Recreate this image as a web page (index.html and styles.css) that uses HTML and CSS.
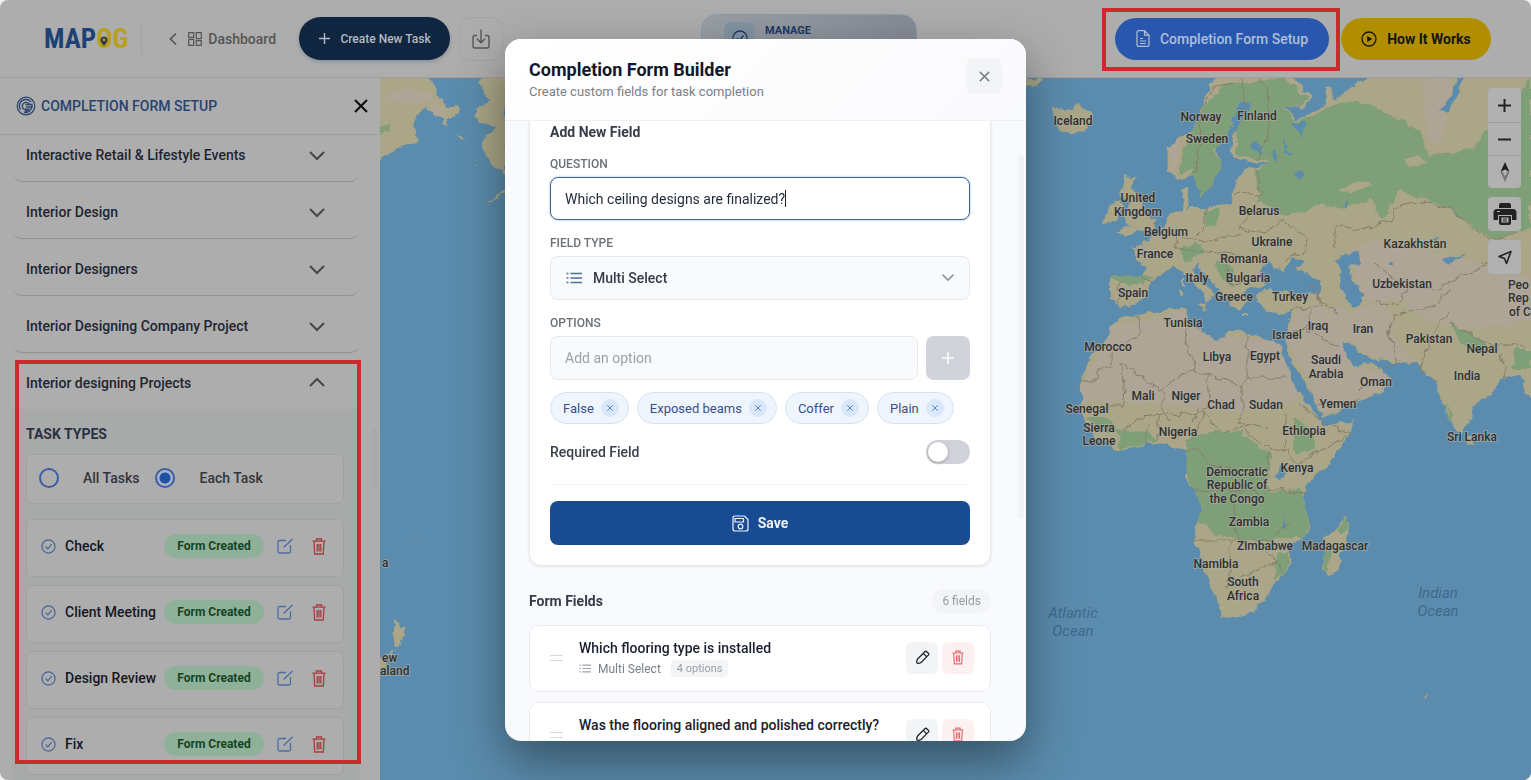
FILE: index.html
```html
<!DOCTYPE html>
<html lang="en">
<head>
<meta charset="utf-8">
<meta name="viewport" content="width=device-width, initial-scale=1">
<title>MAPOG – Completion Form Builder</title>
<link rel="stylesheet" href="styles.css">
</head>
<body>
<svg class="defs" width="0" height="0" aria-hidden="true">
  <symbol id="i-chev" viewBox="0 0 18 18"><path d="M2 6l7 7 7-7" fill="none" stroke="currentColor" stroke-width="2"/></symbol>
  <symbol id="i-x" viewBox="0 0 14 14"><path d="M1 1l12 12M13 1L1 13" fill="none" stroke="currentColor" stroke-width="2"/></symbol>
  <symbol id="i-xs" viewBox="0 0 14 14"><path d="M2 2l10 10M12 2L2 12" fill="none" stroke="currentColor" stroke-width="1.6"/></symbol>
  <symbol id="i-plus" viewBox="0 0 14 14"><path d="M7 1v12M1 7h12" fill="none" stroke="currentColor" stroke-width="1.5"/></symbol>
  <symbol id="i-check" viewBox="0 0 16 16"><circle cx="8" cy="8" r="7" fill="none" stroke="currentColor" stroke-width="1.3"/><path d="M5 8l2.300 2.500 4.200-5" fill="none" stroke="currentColor" stroke-width="1.3"/></symbol>
  <symbol id="i-edit" viewBox="0 0 16 16"><path d="M9 2.500H2.500q-1.500 0-1.500 1.500v9.500q0 1.500 1.500 1.500H12q1.500 0 1.500-1.500V7M6.500 9.500L15.500 1" fill="none" stroke="currentColor" stroke-width="1.3"/></symbol>
  <symbol id="i-trash" viewBox="0 0 14 17"><path d="M.5 3.200h13M4.500 3V1h5v2M2 3.500L2.700 16h8.600L12 3.500M5.200 6v7.500M7 6v7.500M8.800 6v7.500" fill="none" stroke="currentColor" stroke-width="1.3"/></symbol>
  <symbol id="i-list" viewBox="0 0 16 12"><path d="M4.500 1.500H16M4.500 6H16M4.500 10.500H16M.5 1.500h2M.5 6h2M.5 10.500h2" fill="none" stroke="currentColor" stroke-width="1.5"/></symbol>
  <symbol id="i-pen" viewBox="0 0 16 16"><path d="M10.500 1.800q1-1 2 0l1.700 1.700q1 1 0 2L6.800 13q-2 1.400-3.800 1.200-1.200-.1-1.200-1.200Q1.800 11 3 9.300zM8.800 3.600l3.600 3.600" fill="none" stroke="currentColor" stroke-width="1.4"/></symbol>
</svg>

<div class="app">
  <header class="topbar">
    <div class="topbar-left">
      <div class="logo"><span>MAP</span><span class="logo-y">O<svg viewBox="0 0 8 10" width="8" height="10" aria-hidden="true"><path d="M4 10C1 6.500.5 5.500.5 4a3.500 3.500 0 017 0c0 1.500-.5 2.500-3.500 6z" fill="#333c44"/><circle cx="4" cy="3.800" r="1.400" fill="#b8a22c"/></svg></span><span class="logo-y">G</span></div>
      <a class="dash" href="#">
        <svg width="8" height="14" viewBox="0 0 8 14" aria-hidden="true"><path d="M7 1.500L1.500 7 7 12.500" fill="none" stroke="currentColor" stroke-width="1.700"/></svg>
        <svg width="14" height="14" viewBox="0 0 14 14" aria-hidden="true"><path d="M.7.700h5v4.600h-5zM8.300.700h5v6h-5zM.7 7.300h5v6h-5zM8.300 8.700h5v4.600h-5z" fill="none" stroke="currentColor" stroke-width="1.200"/></svg>
        <span>Dashboard</span>
      </a>
      <button class="create" type="button"><svg width="13" height="13"><use href="#i-plus"/></svg>Create New Task</button>
      <button class="download" type="button" aria-label="Download"><svg width="18" height="20" viewBox="0 0 18 20"><path d="M5 6.500H3q-2 0-2 2V17q0 2 2 2h12q2 0 2-2V8.500q0-2-2-2h-2M9 .5v13M5 9.800l4 4 4-4" fill="none" stroke="currentColor" stroke-width="1.400"/></svg></button>
    </div>
    <div class="manage"><span class="manage-icon"><svg width="16" height="16"><use href="#i-check"/></svg></span><span>MANAGE</span></div>
    <div class="topbar-right">
      <div class="marked"><button class="pill pill-blue" type="button"><svg width="14" height="17" viewBox="0 0 14 17" aria-hidden="true"><path d="M1 2q0-1.300 1.300-1.300h6.200L13 5.200V15q0 1.300-1.300 1.300H2.300Q1 16.300 1 15zM8.500.700v4.500H13M4 8.500h3M4 11h6M4 13.500h6" fill="none" stroke="currentColor" stroke-width="1.200"/></svg>Completion Form Setup</button></div>
      <button class="pill pill-yellow" type="button"><svg width="16" height="16" viewBox="0 0 16 16" aria-hidden="true"><circle cx="8" cy="8" r="7" fill="none" stroke="currentColor" stroke-width="1.300"/><path d="M6.200 5l5 3-5 3z" fill="currentColor"/></svg>How It Works</button>
    </div>
  </header>

  <div class="main">
    <aside class="side">
      <div class="side-head">
        <svg width="20" height="20" viewBox="0 0 20 20" aria-hidden="true"><g fill="none" stroke="currentColor"><circle cx="10" cy="10" r="8.800" stroke-width="1.200"/><path d="M15 6.200A6.300 6.300 0 104.500 13.500M16 10.500A6.200 6.200 0 018 16" stroke-width="1.400"/><path d="M13 7.700A3.800 3.800 0 1013.500 12M9.500 8.500h6.500v2.300l-6 .2M10 17.500V13l3 2" stroke-width="1.300"/></g></svg>
        <h2>COMPLETION FORM SETUP</h2>
        <button type="button" aria-label="Close panel"><svg width="14" height="14"><use href="#i-x"/></svg></button>
      </div>
      <div class="side-body">
        <div class="acc">
          <button class="acc-row" type="button">Interactive Retail &amp; Lifestyle Events<svg width="18" height="18"><use href="#i-chev"/></svg></button>
          <button class="acc-row" type="button">Interior Design<svg width="18" height="18"><use href="#i-chev"/></svg></button>
          <button class="acc-row" type="button">Interior Designers<svg width="18" height="18"><use href="#i-chev"/></svg></button>
          <button class="acc-row" type="button">Interior Designing Company Project<svg width="18" height="18"><use href="#i-chev"/></svg></button>
          <section class="acc-open">
            <button class="acc-row open" type="button">Interior designing Projects<svg width="18" height="18"><use href="#i-chev"/></svg></button>
            <div class="acc-body">
              <h3>TASK TYPES</h3>
              <div class="radios">
                <label><input type="radio" name="scope">All Tasks</label>
                <label><input type="radio" name="scope" checked>Each Task</label>
              </div>
              <ul class="tasks">
                <li><svg width="15" height="15"><use href="#i-check"/></svg><span class="task-name">Check</span><span class="created">Form Created</span><button class="t-edit" type="button" aria-label="Edit"><svg width="16" height="16"><use href="#i-edit"/></svg></button><button class="t-del" type="button" aria-label="Delete"><svg width="14" height="17"><use href="#i-trash"/></svg></button></li>
                <li><svg width="15" height="15"><use href="#i-check"/></svg><span class="task-name">Client Meeting</span><span class="created">Form Created</span><button class="t-edit" type="button" aria-label="Edit"><svg width="16" height="16"><use href="#i-edit"/></svg></button><button class="t-del" type="button" aria-label="Delete"><svg width="14" height="17"><use href="#i-trash"/></svg></button></li>
                <li><svg width="15" height="15"><use href="#i-check"/></svg><span class="task-name">Design Review</span><span class="created">Form Created</span><button class="t-edit" type="button" aria-label="Edit"><svg width="16" height="16"><use href="#i-edit"/></svg></button><button class="t-del" type="button" aria-label="Delete"><svg width="14" height="17"><use href="#i-trash"/></svg></button></li>
                <li><svg width="15" height="15"><use href="#i-check"/></svg><span class="task-name">Fix</span><span class="created">Form Created</span><button class="t-edit" type="button" aria-label="Edit"><svg width="16" height="16"><use href="#i-edit"/></svg></button><button class="t-del" type="button" aria-label="Delete"><svg width="14" height="17"><use href="#i-trash"/></svg></button></li>
              </ul>
            </div>
          </section>
        </div>
        <div class="side-thumb"></div>
        <div class="side-mark"></div>
      </div>
    </aside>

    <div class="map">
      <svg class="map-svg" viewBox="380 78 1151 702" preserveAspectRatio="xMidYMid slice" role="img" aria-label="World map">
        <defs>
          <filter id="rough" x="-5%" y="-5%" width="110%" height="110%"><feTurbulence type="fractalNoise" baseFrequency=".09" numOctaves="3" seed="4"/><feDisplacementMap in="SourceGraphic" scale="9" xChannelSelector="R" yChannelSelector="G"/></filter>
          <clipPath id="land-clip"><use href="#eurasia"/><use href="#africa"/></clipPath>
        </defs>
        <g filter="url(#rough)">
          <path id="eurasia" class="land" d="M1110 276L1140 277 1145 267 1130 247 1147 242 1163 227 1173 213 1183 210 1180 190 1187 185 1189 197 1187 207 1207 207 1232 203 1233 190 1237 182 1243 170 1258 168 1268 162 1250 163 1233 157 1233 133 1240 122 1252 105 1240 100 1226 135 1217 150 1221 166 1212 184 1202 198 1193 175 1177 180 1168 170 1167 147 1193 130 1207 93 1220 70H1283L1312 97 1303 110 1285 104 1296 120 1309 116 1327 103 1325 87 1331 86 1333 100 1380 70H1540V400L1528 397 1520 373 1503 378 1497 390 1477 405 1468 423 1460 433 1450 423 1442 403 1438 380 1427 377 1417 363 1393 362 1373 358 1362 354 1350 344 1340 340 1353 367 1372 362 1390 378 1383 390 1360 401 1323 418 1318 407 1303 380 1287 353 1285 345 1288 330 1293 310 1280 313 1267 312 1257 303 1256 294 1265 288 1277 287 1300 291 1320 290 1320 281 1297 270 1303 262 1290 258 1284 272 1268 262 1262 272 1265 284 1253 288 1243 292 1248 302 1238 310 1223 295 1197 264 1190 268 1202 282 1215 293 1206 305 1203 294 1184 272 1173 267 1157 277 1149 292 1137 305 1120 308 1110 298z"/>
          <path id="africa" class="land" d="M1121 318L1137 315 1183 307 1188 310 1187 322 1202 333 1220 341 1228 330 1238 329 1247 333 1276 340 1283 357 1297 390 1303 398 1318 416 1322 423 1328 426 1352 421 1350 431 1333 460 1307 485 1303 497 1309 520 1308 533 1290 546 1289 568 1277 580 1270 593 1253 613 1227 618 1220 615 1220 605 1210 587 1195 540 1197 522 1202 513 1195 490 1185 477 1185 450 1177 448 1167 443 1147 445 1117 450 1097 437 1083 418 1078 408 1082 402 1080 380 1090 357 1107 340 1110 328z"/>
          <g class="land">
            <path d="M1345 517L1349 528 1345 545 1336 572 1327 575 1322 568 1326 550 1324 538 1336 530z"/>
            <path d="M1052 107L1060 112 1078 106 1091 112 1089 126 1071 135 1056 126z"/>
            <path d="M1124 177L1135 178 1131 188 1137 193 1146 215 1156 219 1153 229 1130 234 1118 233 1130 224 1124 214 1131 203 1121 195zM1108 203l12-4 2 10-8 13-10 1z"/>
            <path d="M1467 436q8 2 7 8l-6 1zM1181 289h3v9h-3zM1182 278h2v7h-2zM1198 304l9 1-2 5zM1241 315h9v2h-9zM1284 318l5-2v2z"/>
            <path d="M376 70H421L433 84 447 107 454 105 460 112 448 120 447 126 438 114 424 108 415 118 417 143 404 145 376 163zM478 78L490 100 472 114 480 123 496 126 480 146 492 165 506 175V70zM456 135l8 2-1 2zM473 163l5 1-2 2zM482 205l24-15v4z"/>
            <path d="M394 619l7 9 5-2-7 20-5-2zM380 659l16-11-4 10-12 12zM411 542l8-5-6 4zM1423 697l6-3-2 4z"/>
            <path d="M1020 78h24q-6 8-24 8z"/>
          </g>
          <g clip-path="url(#land-clip)">
            <path class="desert" d="M1075 402L1110 327 1140 322 1182 310 1202 333 1225 338 1276 340 1300 393 1290 405 1240 412 1200 408 1150 402zM1287 340L1295 312 1320 305 1350 340 1356 367 1390 375 1380 390 1323 416 1310 385zM1326 305L1350 312 1385 300 1395 340 1414 362 1365 354 1340 330zM1350 250L1380 240 1420 250 1470 262 1510 268 1531 280V318L1480 330 1430 322 1400 300 1360 300z"/>
            <path class="desert" d="M1422 78h30l-5 40-12 35-9-30zM1168 145l14-5-8 35z"/>
            <path class="forest" d="M1205 105L1225 84 1285 78 1308 98 1300 108 1283 104 1296 122 1310 118 1340 100 1370 105 1400 120 1420 130 1428 155 1470 150 1500 118 1531 78V228L1490 240 1470 222 1440 205 1400 190 1382 220 1370 200 1340 208 1318 205 1286 218 1260 200 1255 175 1268 160 1235 155 1238 130 1215 150 1222 168 1202 200 1190 170 1178 175 1188 140z"/>
            <path class="land" d="M1402 158l18-1 8 6-20 4zM1340 190l20-10 10 6-22 8zM1425 145l28-5 15 10-35 4z"/>
            <path class="forest" d="M1186 440L1215 430 1240 432 1262 448 1272 455 1266 478 1270 492 1300 488 1309 520 1305 537 1270 540 1240 540 1210 532 1196 520 1202 510 1192 485 1184 470zM1117 430L1150 432 1158 442 1120 448zM1085 415l25 4 6 12-15 2zM1295 415l18 18 2 18-20 2zM1276 555l12-3v22l-13 4zM1110 274l45 2-10 8-34-2zM1180 248l18-5 8 8-20 10zM1205 212l14-3-2 14-10 3zM1215 262l15 3 5 22-12-6zM1450 320l25 18 16 10-5 5-25-10zM1515 350h16v18h-18zM1445 405l8 12-3 8z"/>
          </g>
          <path class="forest" d="M1338 530l7-12 3 10-6 6zM1323 546l7 2-1 24h-4zM378 126l10-2 1 8-10 4z"/>
          <path class="desert" d="M384 96l20-8 25 4 8 8-22 4-20-1zM428 108l12-2 8 12-4 4z"/>
          <g class="water">
            <path d="M1337 262L1345 254 1357 252 1360 262 1349 268 1352 282 1363 293 1363 304 1353 308 1345 298 1341 280z"/>
            <path d="M1262 265l20 8 16-4 24 18-4 7-38-3-17-2zM1278 468l6-2v8l-8 6zM1282 508l3 22-3-2zM1443 108l15-30h5l-12 32-12 2zM1388 262h5v3h-5zM1442 260l24-6-18 10zM1344 205l5-7-3 12zM1296 172l4-3 3 6-4 6zM1253 142l10 2-1 10-7-3zM1288 122l16 1v14l-10-10zM1430 240l10-5-6 8zM1274 150l5 10-10-6zM1283 135l9 22-4-2z"/>
          </g>
          <g class="border">
            <path d="M1137 315l4 17-30 23v14h-13v11h-18M1120 364h4l36 25 34-21M1122 366l2 40h-20M1187 322l-1 20 8 28 13 4 36 13M1247 333v45h40M1247 378l-5 10M1242 388v26l-4 10 30 5M1207 374l3 24-7 15-38 2M1163 390v25l-25 4-13 12M1194 420l5-15M1158 415v28M1147 425v20M1205 413l-15 30M1203 415l20 16 18-3 30 22M1185 450h15l10 15 20 3M1195 490h60l4 10M1194 540h62l15-2 20-15M1230 541v45h-4M1235 485v45l10 14M1268 450l20 0 10 15 22-15M1268 450v38l38 5M1287 412l-4 40M1300 405l20 15 30 15-40 20M1258 545l20 16-38 15M1278 560l5 20M1170 420l-8-5"/>
            <path d="M1193 173l8-30-2-30 15-25 20-5M1240 78l4 15v25M1262 78l5 10 3 40-12 30M1258 170l2 25-25-2M1260 198l-20 30 25 5 17-12M1282 220l25 18-4 16-20 5M1205 207v20l-8 8M1163 227l16 10-4 12 25 3M1200 250l40 5-20 8M1225 262l5 20 20 3M1180 237l30 5 30-7M1140 277l18 6M1120 280l-2 25M1310 285l14 20 16 8M1290 310l32-5M1313 307l-8 20-16 10M1305 328l24 16 10 1M1318 405l40-5M1358 393l14-15M1335 225l20 5 38-10v-12l30-7 30 10 25 20 10 10 30-8M1335 225v25M1373 262l10 8 25 20-10 15-24-5M1392 315l-4 20 10 25-12 8M1392 315l45-10 10-15M1447 310l-14 25-10 25-4 15M1450 320l30 22 45 5M1500 355l6 22M1405 285l30 5 40-20 25-15"/>
          </g>
        </g>
        <g class="labels">
          <text x="1073" y="125">Iceland</text><text x="1201" y="121">Norway</text><text x="1257" y="120">Finland</text><text x="1207" y="143">Sweden</text>
          <text x="1138" y="202">United</text><text x="1138" y="216">Kingdom</text><text x="1166" y="236">Belgium</text><text x="1155" y="258">France</text>
          <text x="1259" y="215">Belarus</text><text x="1272" y="246">Ukraine</text><text x="1244" y="263">Romania</text><text x="1197" y="282">Italy</text><text x="1248" y="282">Bulgaria</text>
          <text x="1133" y="297">Spain</text><text x="1234" y="301">Greece</text><text x="1290" y="301">Turkey</text><text x="1415" y="248">Kazakhstan</text><text x="1402" y="288">Uzbekistan</text>
          <text x="1183" y="327">Tunisia</text><text x="1108" y="351">Morocco</text><text x="1217" y="361">Libya</text><text x="1265" y="360">Egypt</text><text x="1287" y="339">Israel</text><text x="1318" y="330">Iraq</text><text x="1363" y="333">Iran</text><text x="1429" y="343">Pakistan</text><text x="1482" y="353">Nepal</text>
          <text x="1326" y="364">Saudi</text><text x="1326" y="378">Arabia</text><text x="1376" y="386">Oman</text><text x="1467" y="380">India</text><text x="1338" y="408">Yemen</text>
          <text x="1143" y="400">Mali</text><text x="1186" y="400">Niger</text><text x="1221" y="409">Chad</text><text x="1266" y="409">Sudan</text><text x="1087" y="413">Senegal</text><text x="1099" y="432">Sierra</text><text x="1099" y="445">Leone</text><text x="1178" y="436">Nigeria</text><text x="1304" y="435">Ethiopia</text><text x="1472" y="441">Sri Lanka</text>
          <text x="1297" y="472">Kenya</text><text x="1237" y="476">Democratic</text><text x="1237" y="489">Republic of</text><text x="1237" y="503">the Congo</text><text x="1249" y="526">Zambia</text><text x="1265" y="550">Zimbabwe</text><text x="1335" y="550">Madagascar</text><text x="1216" y="568">Namibia</text><text x="1243" y="586">South</text><text x="1243" y="600">Africa</text>
          <g class="start"><text x="1508" y="289">Peo</text><text x="1508" y="302">Rep</text><text x="1509" y="316">of C</text><text x="382" y="567">a</text><text x="382" y="662">ew</text><text x="380" y="675">aland</text></g>
        </g>
        <g class="ocean"><text x="1073" y="618">Atlantic</text><text x="1073" y="636">Ocean</text><text x="1438" y="598">Indian</text><text x="1438" y="616">Ocean</text></g>
      </svg>
      <div class="map-tools">
        <div class="tool-group">
          <button type="button" aria-label="Zoom in"><svg width="13" height="13" viewBox="0 0 13 13"><path d="M6.500 0v13M0 6.500h13" stroke="currentColor" stroke-width="2"/></svg></button>
          <button type="button" aria-label="Zoom out"><svg width="13" height="13" viewBox="0 0 13 13"><path d="M0 6.500h13" stroke="currentColor" stroke-width="2"/></svg></button>
          <button type="button" aria-label="Reset north"><svg width="10" height="20" viewBox="0 0 10 20"><path d="M5 0l4.500 10L5 7.500.5 10z" fill="currentColor"/><path d="M.5 10h9L5 20z" fill="#777"/><path d="M5 8l2 3-2 3-2-3z" fill="#b3b3b3"/></svg></button>
        </div>
        <div class="tool-group"><button type="button" aria-label="Print"><svg width="24" height="24" viewBox="0 0 24 24"><path d="M6 6V3q0-2 2-2h8q2 0 2 2v3z" fill="currentColor"/><path d="M4 7h16q3.500 0 3.500 3.500V17q0 1-1 1H19v-5H5v5H1.500q-1 0-1-1v-6.500Q.5 7 4 7z" fill="currentColor"/><path d="M6 14h12v7q0 2-2 2H8q-2 0-2-2z" fill="currentColor"/><path d="M8.500 15.500h7v5h-7z" fill="#b3b3b3"/><path d="M10 17h4M10 19h4" stroke="currentColor"/><path d="M4 9.500h3" stroke="#b3b3b3"/></svg></button></div>
        <div class="tool-group"><button type="button" aria-label="Locate"><svg width="16" height="15" viewBox="0 0 16 15"><path d="M2 6.500L14 1.500 9.500 13.500 7.500 8.500z" fill="none" stroke="currentColor" stroke-width="1.600" stroke-linejoin="round"/></svg></button></div>
      </div>
    </div>
  </div>
</div>

<div class="overlay">
  <div class="modal" role="dialog" aria-labelledby="dlg-title">
    <div class="modal-head">
      <div><h1 id="dlg-title">Completion Form Builder</h1><p>Create custom fields for task completion</p></div>
      <button class="close" type="button" aria-label="Close"><svg width="13" height="13"><use href="#i-xs"/></svg></button>
    </div>
    <div class="modal-body">
      <form class="card">
        <h2>Add New Field</h2>
        <div class="group">
          <label for="q">QUESTION</label>
          <div class="box active"><input id="q" type="text" value="Which ceiling designs are finalized?"><span class="caret"></span></div>
        </div>
        <div class="group">
          <label for="type">FIELD TYPE</label>
          <div class="select"><svg class="sel-list" width="16" height="12"><use href="#i-list"/></svg><select id="type"><option>Multi Select</option></select><svg class="sel-chev" width="14" height="14"><use href="#i-chev"/></svg></div>
        </div>
        <div class="group">
          <label for="opt">OPTIONS</label>
          <div class="opt-row"><input class="box" id="opt" type="text" placeholder="Add an option"><button class="add" type="button" aria-label="Add option"><svg width="14" height="14"><use href="#i-plus"/></svg></button></div>
        </div>
        <div class="chips">
          <span class="chip">False<button type="button" aria-label="Remove False"><svg width="8" height="8"><use href="#i-xs"/></svg></button></span>
          <span class="chip">Exposed beams<button type="button" aria-label="Remove Exposed beams"><svg width="8" height="8"><use href="#i-xs"/></svg></button></span>
          <span class="chip">Coffer<button type="button" aria-label="Remove Coffer"><svg width="8" height="8"><use href="#i-xs"/></svg></button></span>
          <span class="chip">Plain<button type="button" aria-label="Remove Plain"><svg width="8" height="8"><use href="#i-xs"/></svg></button></span>
        </div>
        <div class="required"><label for="req">Required Field</label><input id="req" type="checkbox" role="switch"></div>
        <button class="save" type="button"><svg width="17" height="17" viewBox="0 0 17 17" aria-hidden="true"><path d="M1 3q0-2 2-2h9.500L16 4.500V14q0 2-2 2H3q-2 0-2-2zM3 3.500h8.500V7H3z" fill="none" stroke="currentColor" stroke-width="1.200"/><circle cx="8.500" cy="11.500" r="2.300" fill="none" stroke="currentColor" stroke-width="1.200"/></svg>Save</button>
      </form>
      <div class="list-head"><h2>Form Fields</h2><span>6 fields</span></div>
      <div class="fields">
        <article class="field">
          <span class="grip"></span>
          <div class="field-text"><h3>Which flooring type is installed</h3><p><svg width="12" height="9"><use href="#i-list"/></svg>Multi Select<span>4 options</span></p></div>
          <button class="f-edit" type="button" aria-label="Edit field"><svg width="15" height="15"><use href="#i-pen"/></svg></button>
          <button class="f-del" type="button" aria-label="Delete field"><svg width="12" height="15"><use href="#i-trash"/></svg></button>
        </article>
        <article class="field">
          <span class="grip"></span>
          <div class="field-text"><h3>Was the flooring aligned and polished correctly?</h3><p><svg width="12" height="9"><use href="#i-list"/></svg>Yes/No</p></div>
          <button class="f-edit" type="button" aria-label="Edit field"><svg width="15" height="15"><use href="#i-pen"/></svg></button>
          <button class="f-del" type="button" aria-label="Delete field"><svg width="12" height="15"><use href="#i-trash"/></svg></button>
        </article>
      </div>
      <div class="modal-thumb"></div>
    </div>
  </div>
</div>
</body>
</html>
```
FILE: styles.css
```css
* { box-sizing: border-box; }
body { margin: 0; background: #f2f2f2; font-family: Roboto, "Liberation Sans", sans-serif; font-size: 14px; color: #1d2330; overflow: hidden; }
h1, h2, h3, p, ul { margin: 0; padding: 0; }
ul { list-style: none; }
button { font: inherit; color: inherit; border: 0; background: none; padding: 0; display: flex; align-items: center; justify-content: center; cursor: pointer; }
svg { flex: none; display: block; }
.defs { position: absolute; }

.app { height: 100vh; display: flex; flex-direction: column; border-radius: 8px; overflow: hidden; background: #adadad; }
.topbar { height: 78px; flex: none; display: flex; align-items: center; justify-content: space-between; padding: 0 40px 0 44px; border-bottom: 1px solid #9f9f9f; }
.topbar-left { display: flex; align-items: center; }
.logo { display: flex; align-items: center; height: 32px; padding-right: 13px; border-right: 1px solid #a4a4a4; font-family: "Roboto Condensed", "Liberation Sans Narrow", Roboto, sans-serif; font-size: 27px; font-weight: 700; color: #1d4277; }
.logo-y { position: relative; color: #b8a01c; }
.logo-y svg { position: absolute; left: 50%; top: 50%; margin: -3px 0 0 -4px; }
.dash { display: flex; align-items: center; gap: 11px; margin-left: 27px; color: #535558; text-decoration: none; font-weight: 500; }
.dash span { margin-left: -5px; }
.create { height: 43px; width: 151px; margin-left: 23px; gap: 9px; border-radius: 22px; background: #10253f; color: #b4bac2; font-size: 12px; font-weight: 500; box-shadow: 0 2px 4px #8a8f96; white-space: nowrap; }
.download { width: 44px; height: 44px; margin-left: 9px; border: 1px solid #a3a4a5; border-radius: 12px; color: #54575c; }
.manage { align-self: flex-end; width: 216px; height: 63px; padding: 7px 22px; display: flex; gap: 10px; border: 1px solid #8f98a6; border-radius: 16px; background: linear-gradient(100deg, #9a9fa6, #858b97); color: #1d3a66; font-size: 11px; font-weight: 700; line-height: 18px; }
.manage-icon { width: 31px; height: 31px; border-radius: 8px; background: #8494a3; padding-top: 8px; display: flex; justify-content: center; }
.topbar-right { display: flex; gap: 12px; }
.marked { position: relative; }
.marked::after { content: ""; position: absolute; inset: -10px -11px -11px -13px; border: 4px solid #cc2a2c; pointer-events: none; }
.pill { height: 42px; border-radius: 21px; gap: 10px; font-weight: 700; white-space: nowrap; }
.pill-blue { width: 214px; background: #2857ad; color: #b0bed8; font-weight: 500; }
.pill-yellow { width: 150px; background: #b08e00; color: #16150f; }

.main { flex: 1; min-height: 0; display: flex; }
.side { width: 380px; flex: none; display: flex; flex-direction: column; }
.side-head { height: 57px; flex: none; display: flex; align-items: center; gap: 5px; padding: 0 12px 0 16px; border-bottom: 1px solid #9d9f9f; color: #27436f; }
.side-head h2 { flex: 1; font-size: 14px; font-weight: 500; }
.side-head button { color: #0c0c0c; }
.side-body { position: relative; flex: 1; min-height: 0; overflow: hidden; padding: 0 20px 0 12px; }
.acc { display: flex; flex-direction: column; gap: 5px; margin-top: -6px; }
.acc-row { width: 100%; height: 52px; flex: none; justify-content: space-between; padding: 0 34px 0 14px; border-radius: 10px; box-shadow: 0 2px 1px -1px #8e8f90; background: #adadad; font-weight: 500; text-align: left; color: #1f2531; }
.acc-row svg { color: #454749; }
.acc-row.open { border-radius: 10px 10px 0 0; box-shadow: none; }
.acc-row.open svg { transform: rotate(180deg); }
.acc-body { padding: 15px 16px 40px 14px; background: #a8aaaa; }
.acc-body h3 { font-size: 14px; font-weight: 700; line-height: 20px; color: #2b3140; }
.radios { height: 50px; margin-top: 10px; padding: 0 12px 2px; display: flex; align-items: center; gap: 16px; border: 1px solid #a0a3a3; border-radius: 6px; background: #adadad; font-weight: 500; color: #32363c; }
.radios label { display: flex; align-items: center; gap: 24px; }
input[type="radio"] { appearance: none; width: 20px; height: 20px; margin: 0; border: 2px solid #3c5da3; border-radius: 50%; }
input[type="radio"]:checked { background: radial-gradient(circle, #2050a2 0 5px, #a8b4c8 6px); }
.tasks { margin-top: 15px; display: flex; flex-direction: column; gap: 8px; }
.tasks li { height: 58px; padding: 0 17px 4px 14px; display: flex; align-items: center; border: 1px solid #a0a3a3; border-radius: 6px; background: #adadad; color: #476397; }
.task-name { flex: 1; margin-left: 9px; font-weight: 500; color: #15181f; white-space: nowrap; }
.created { width: 100px; line-height: 24px; border-radius: 12px; background: #90b199; text-align: center; font-size: 12px; font-weight: 700; color: #144523; }
.t-edit { margin-left: 13px; color: #4a6ca5; }
.t-del { margin-left: 19px; color: #ab3c40; }
.side-thumb { position: absolute; right: 2px; top: 294px; width: 6px; height: 60px; border-radius: 3px; background: #a8aaa8; }
.side-mark { position: absolute; left: 15px; top: 225px; width: 346px; bottom: 16px; border: 4px solid #cc2a2c; pointer-events: none; }

.map { position: relative; flex: 1; min-width: 0; background: #5b8cad; }
.map-svg { width: 100%; height: 100%; }
.land { fill: #aaa687; }
.desert { fill: #aea597; }
.forest { fill: #7f9f78; }
.water { fill: #5b8cad; }
.border { fill: none; stroke: #857c6b; stroke-width: 1; }
.labels, .ocean { font-weight: 500; font-size: 12px; text-anchor: middle; fill: #2f302f; }
.labels text { stroke: #b0aea4; stroke-width: 2px; stroke-opacity: .6; paint-order: stroke; }
.start { text-anchor: start; }
.ocean { font-size: 15px; font-style: italic; font-weight: 400; fill: #3c6a8d; }
.map-tools { position: absolute; right: 10px; top: 10px; display: flex; flex-direction: column; gap: 9px; }
.tool-group { border-radius: 4px; background: #b1b1b1; overflow: hidden; color: #222; }
.tool-group button { width: 33px; height: 34px; }
.tool-group button + button { border-top: 1px solid #9a9a9a; height: 33px; }

.overlay { position: fixed; inset: 0; display: flex; align-items: center; justify-content: center; }
.modal { width: 521px; max-width: 95vw; height: 90vh; display: flex; flex-direction: column; border-radius: 16px; overflow: hidden; background: #f9fafd; box-shadow: 0 20px 50px rgba(0, 0, 0, .42); }
.modal-head { height: 82px; flex: none; display: flex; justify-content: space-between; padding: 19px 24px; background: linear-gradient(135deg, #fff, #f9fafc); border-bottom: 1px solid #eef0f3; }
.modal-head h1 { font-size: 18px; line-height: 24px; font-weight: 700; color: #111827; }
.modal-head p { font-size: 13px; line-height: 20px; color: #7b8088; }
.close { width: 36px; height: 36px; border-radius: 8px; background: #f3f4f6; color: #7b7f86; }
.modal-body { position: relative; flex: 1; min-height: 0; overflow: hidden; padding: 0 35px 0 24px; }
.card { margin-top: -20px; padding: 20px; background: #fff; border: 1px solid #e7e9ee; border-radius: 12px; box-shadow: 0 1px 3px #e3e5ea; }
.card h2, .list-head h2 { font-size: 14px; line-height: 20px; font-weight: 700; color: #363c4a; }
.group { margin-top: 14px; }
.group label { display: block; font-size: 12px; line-height: 16px; margin-bottom: 5px; font-weight: 500; color: #6b7079; }
.group + .group { margin-top: 15px; }
.box { width: 100%; height: 43px; display: flex; align-items: center; padding: 0 14px; border: 1px solid #e5e8ed; border-radius: 8px; background: #f9fafc; font: 400 14px Roboto, sans-serif; color: #1f2937; }
.box.active { background: #fff; border-color: #3c6494; box-shadow: 0 0 2px 1px #d3e2f2; }
.box.active input { field-sizing: content; border: 0; padding: 0; outline: 0; background: none; font: inherit; color: inherit; }
.caret { width: 1px; height: 17px; background: #222; }
.box::placeholder { color: #9ca0a8; }
.select { position: relative; }
.select select { appearance: none; width: 100%; height: 44px; padding: 0 42px; border: 1px solid #e5e8ed; border-radius: 8px; background: #f9fafc; font: 500 14px Roboto, sans-serif; color: #353b47; }
.sel-list { position: absolute; left: 16px; top: 16px; color: #4a7296; }
.sel-chev { position: absolute; right: 15px; top: 14px; color: #8e939b; }
.opt-row { display: flex; gap: 8px; }
.opt-row .box { height: 44px; }
.add { width: 44px; height: 44px; flex: none; border-radius: 8px; background: #d1d3db; color: #fff; }
.chips { display: flex; flex-wrap: wrap; gap: 8px; margin-top: 12px; }
.chip { height: 32px; display: flex; align-items: center; gap: 7px; padding: 0 9px 0 12px; border: 1px solid #d5e2f3; border-radius: 16px; background: #eff5fd; font-size: 13px; color: #3c4f86; }
.chip button { width: 18px; height: 18px; border-radius: 50%; background: #d9e8fb; color: #4b80b8; }
.required { display: flex; justify-content: space-between; align-items: center; margin-top: 16px; padding-bottom: 20px; border-bottom: 1px solid #f3f4f6; font-weight: 500; color: #3a404b; }
.required input { appearance: none; width: 44px; height: 24px; margin: 0; padding: 2px; border-radius: 12px; background: #d1d2d9; }
.required input::before { content: ""; display: block; width: 20px; height: 20px; border-radius: 50%; background: #fff; box-shadow: 0 1px 3px #999; }
.save { width: 100%; height: 44px; margin-top: 16px; gap: 9px; border-radius: 8px; background: #184b91; color: #eef3fa; font-weight: 700; }
.list-head { display: flex; justify-content: space-between; align-items: center; margin: 23px 0 12px; }
.list-head span { line-height: 24px; padding: 0 10px; border-radius: 12px; background: #f3f4f6; font-size: 12px; color: #979ba3; }
.fields { display: flex; flex-direction: column; gap: 10px; }
.field { height: 67px; flex: none; display: flex; align-items: center; padding: 0 16px 2px 20px; border: 1px solid #e9ebef; border-radius: 10px; background: #fff; }
.grip { width: 13px; height: 6px; border: solid #d8dadf; border-width: 1px 0; }
.field-text { flex: 1; margin-left: 16px; }
.field h3 { font-size: 14px; line-height: 20px; font-weight: 500; color: #1a202b; }
.field p { display: flex; align-items: center; gap: 7px; margin-top: 2px; font-size: 12px; line-height: 18px; color: #7b8088; }
.field p svg { color: #a0a4ab; }
.field p span { margin-left: 3px; padding: 0 6px; line-height: 17px; border-radius: 4px; background: #f3f4f6; color: #9a9eaa; font-size: 11px; }
.f-edit, .f-del { width: 32px; height: 32px; border-radius: 6px; background: #f3f4f6; color: #22262e; }
.f-del { margin-left: 4px; background: #fdf0f0; color: #df6a6a; }
.modal-thumb { position: absolute; right: 2px; top: 34px; width: 6px; height: 364px; border-radius: 3px; background: #f1f3f6; }
```
